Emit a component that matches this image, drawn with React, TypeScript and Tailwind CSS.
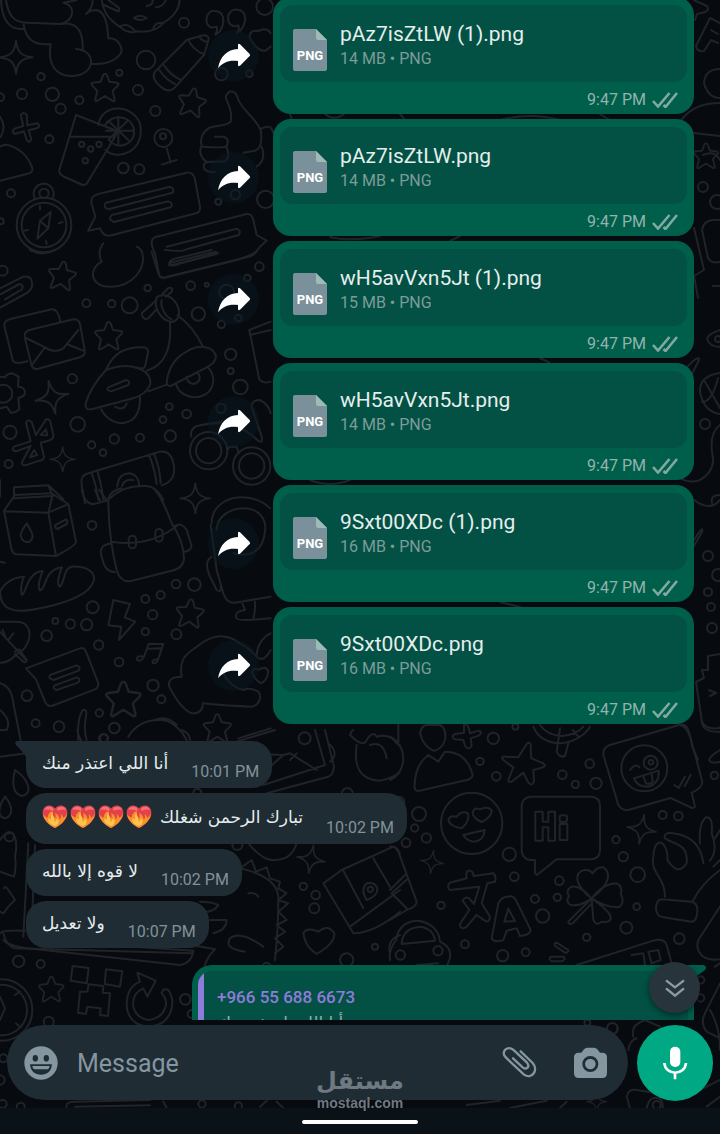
import React from "react";

type Point = [number, number, number];

const STAR = "M0 -42Q4 -42 6 -37L13 -18L36 -15Q45 -13 38 -6L23 10L29 35Q30 44 22 39L0 25L-22 39Q-30 44 -29 35L-23 10L-38 -6Q-45 -13 -36 -15L-13 -18L-6 -37Q-4 -42 0 -42Z";
const SPARK = "M0 -50C4 -15 15 -4 50 0C15 4 4 15 0 50C-4 15 -15 4 -50 0C-15 -4 -4 -15 0 -50Z";

function Dots({ items }: { items: Point[] }) {
  return (
    <>
      {items.map(([x, y, r], i) => (
        <circle key={i} cx={x} cy={y} r={r} />
      ))}
    </>
  );
}

function Wallpaper() {
  return (
    <svg
      aria-hidden="true"
      className="absolute inset-0 h-full w-full"
      viewBox="0 0 720 1134"
      preserveAspectRatio="xMinYMin slice"
      fill="none"
      stroke="#202429"
      strokeWidth={6}
      strokeLinecap="round"
      strokeLinejoin="round"
    >
      <g transform="scale(.33333)">
        <path d="M3 0C5 60 30 92 72 86M18 0C25 45 40 68 80 68L180 72C225 65 228 15 190 8Q215 4 230 0M70 68C75 115 100 138 152 132M180 72C235 62 250 100 248 148M152 132C142 190 165 228 215 228C285 228 295 152 228 147M278 192C335 195 375 165 362 138C352 118 338 113 325 115C322 70 315 35 290 30Q270 30 258 42Q278 25 278 0" />
        <path d="M305 0C312 45 335 65 362 82Q385 103 412 94Q440 98 465 88Q485 78 490 68C525 50 540 20 538 0M312 15L345 30Q365 40 355 22L325 0M440 18Q460 15 458 0M468 22Q490 20 498 0M402 54Q420 40 440 54Q420 66 402 54M360 80Q380 66 404 92M460 85Q465 65 490 70" />
        <path d="M560 120L465 215Q452 235 480 258Q505 282 525 262L612 165L626 118Q626 104 610 106L572 116ZM566 122Q580 150 610 162M598 110Q606 124 624 126M492 196Q512 226 540 238M478 210Q498 240 525 252" />
        <path transform="translate(48 172)" d={SPARK} />
        <path transform="translate(315 263)" d={STAR} />
        <path transform="translate(576 307) rotate(10)" d={STAR} />
        <path d="M622 72C612 45 632 28 650 34C672 38 672 62 668 75Q662 98 646 104Q654 90 650 80Q630 88 622 72M687 68C677 40 697 25 714 29C738 33 738 58 733 70Q726 92 711 98Q719 84 715 76Q695 84 687 68" />
        <path d="M228 345L178 510Q176 520 188 528L248 555Q258 556 262 548L345 410Q352 398 344 390ZM211 410H342M295 375C305 310 395 310 420 370C438 455 352 485 316 450M316 375C335 340 395 345 402 390C406 440 345 450 326 418M355 350V430M318 392H400M328 365L385 420M383 362L330 415" />
        <path d="M62 345Q70 334 80 344L82 376L112 370Q124 376 112 384L86 391L94 417Q88 432 80 420L72 394L44 402Q32 394 44 386L70 378Z" />
        <path d="M0 440Q15 430 30 437Q82 455 98 508Q95 520 80 522L0 542M0 350Q20 380 2 410" />
        <path d="M500 445L512 487M485 494L530 480" />
        <path d="M692 365C700 330 680 310 677 290C685 268 705 270 712 290C718 325 765 350 782 390Q790 445 765 452L730 458M692 365C675 380 640 376 625 385C605 400 600 420 605 438C595 455 605 478 620 485C600 500 615 520 645 515M645 410H670Q690 415 680 438Q670 445 610 440M680 443Q692 470 675 484L620 486M785 385Q815 370 820 400M770 500Q800 480 785 440" />
        <path d="M310 578L560 518Q578 516 584 534L600 620Q602 636 588 640L335 706Q310 712 300 685L264 692L286 650L274 608Q272 590 290 584ZM318 608L510 560Q525 566 518 578L325 628Q306 620 318 608M335 645L505 604Q522 610 512 622L342 666Q322 658 335 645" />
        <circle cx="132" cy="675" r="82" />
        <circle cx="132" cy="675" r="67" />
        <path d="M104 594A30 30 0 1 1 158 594M152 636L120 662L112 716L145 685ZM120 662L145 685M120 618V628M176 670L188 666M72 692L84 690M140 732L138 722" />
        <path d="M465 712L740 642Q755 640 760 660L770 705L800 722L780 740M500 740L710 686Q725 692 716 705L560 748M465 712Q445 720 465 760L478 826Q484 838 498 832L690 785Q770 765 780 740M510 788L648 755M510 788Q502 802 520 794L650 762" />
        <path d="M748 110Q750 88 775 93Q800 80 812 100M748 110Q765 150 795 153L812 140" />
        <Dots items={[[552,68,15],[438,180,28],[123,230,11],[358,218,9],[66,282,15],[157,283,20],[238,301,12],[414,270,15],[182,326,15],[466,333,15],[148,418,12],[490,414,27],[489,409,9],[370,504,16],[418,508,15],[33,580,12],[132,580,14],[655,605,9],[706,584,14],[794,20,25],[664,222,19],[748,221,10],[245,433,8],[272,447,8],[297,433,8],[256,482,8],[2,664,9],[0,292,12],[797,598,26]]} />
      </g>
      <g transform="translate(0 250) scale(.33333)">
        <path transform="translate(186 77) rotate(8)" d={STAR} />
        <path transform="translate(326 258)" d={STAR} />
        <path transform="translate(156 442) rotate(-12)" d={SPARK} />
        <path transform="translate(188 628) scale(.75)" d={SPARK} />
        <path d="M305 35C260 60 275 115 335 110C400 108 435 55 428 15Q425 -5 410 -10M305 35Q290 5 310 -20M90 0Q130 20 165 0" />
        <path d="M0 115L70 80Q100 75 96 110Q90 125 75 132L0 173M0 134L58 102Q72 104 66 118L15 148" />
        <path d="M28 208L155 178Q175 176 180 214M28 208Q8 215 14 232L38 330Q42 345 82 334M88 240L220 208Q235 206 240 222L254 300Q258 315 240 322L115 356Q98 360 94 344L74 260Q72 245 88 240M78 264L135 292Q165 312 190 295L235 240M95 346L132 296M200 282L250 302" />
        <path d="M0 380L15 382Q22 370 38 370L56 380L54 410Q72 410 75 425Q76 440 55 444L58 478Q45 490 32 488L20 470L0 476" />
        <circle cx="10" cy="431" r="27" />
        <path d="M78 518Q84 506 95 516L108 555L138 508Q150 505 152 520L160 555Q162 568 145 572L122 578L132 620Q132 630 118 632L75 646Q62 645 68 632L92 588L48 604Q32 600 42 590L92 574ZM122 555L138 538L142 556ZM90 622L102 600L112 615Z" />
        <path d="M470 150L425 190Q428 212 445 205L468 180M485 135L505 114Q520 110 516 124L498 140M470 142C460 170 480 210 515 216C545 210 540 175 525 155C510 135 485 130 470 142M485 150C480 170 495 200 515 208M510 218C515 290 500 345 440 362M532 195Q580 230 608 288M560 305C600 280 640 290 648 318Q646 340 620 352L512 408Q500 410 500 394Q510 330 560 305M622 350C650 378 645 425 605 438C570 450 535 430 528 402M560 380C562 402 585 410 598 390Q602 375 590 368M500 404L445 424" />
        <path d="M318 360C340 310 370 292 428 292Q446 292 444 308L435 350Q430 360 410 352M318 360C290 390 265 430 256 464Q255 480 275 478L405 443Q440 430 450 405C460 365 400 330 318 360M325 412L378 390Q392 392 385 405L334 424Q316 422 325 412M303 478C320 510 355 528 385 515Q422 500 420 440M345 470Q370 485 380 460" />
        <path d="M265 670L480 605Q512 600 520 640Q530 682 500 700L485 706M265 670Q240 675 245 705L255 760M275 668Q290 710 295 750M292 662Q305 705 310 748M448 616Q465 660 470 702M462 610Q480 655 482 700M352 710Q355 670 390 670Q415 675 418 706M366 708Q374 685 400 690M330 745Q370 705 440 708Q470 710 490 750" />
        <path d="M455 5L475 70Q480 86 498 82L740 22Q768 15 772 0M495 0Q550 5 555 0M508 38Q512 28 530 25L635 0M508 38Q515 52 535 42L655 8" />
        <circle cx="626" cy="602" r="56" />
        <circle cx="626" cy="602" r="38" />
        <circle cx="755" cy="648" r="56" />
        <circle cx="755" cy="648" r="38" />
        <path d="M574 560Q568 540 590 528L690 510M682 600L690 590L710 590L716 610M590 528Q700 500 772 570Q790 585 785 560L755 470Q755 450 780 450Q805 462 812 490" />
        <path d="M748 240L812 215M748 240L778 388Q790 402 812 395M750 255L812 240" />
        <path d="M42 712L145 706L158 738L42 745ZM145 706L190 748M0 690V740" />
        <Dots items={[[8,62,15],[259,160,12],[335,161,11],[389,166,24],[443,114,10],[572,107,13],[620,104,6],[595,192,20],[664,223,11],[715,204,10],[680,126,22],[742,84,10],[778,50,13],[692,313,17],[692,363,9],[721,411,22],[217,386,14],[233,523,22],[30,547,20],[26,642,12],[275,585,11],[343,567,14],[309,608,10],[420,563,12],[511,558,17],[508,470,10],[560,492,13],[489,509,10],[663,475,14]]} />
      </g>
      <g transform="translate(0 490) scale(.33333)">
        <path d="M42 15L155 10L205 42L228 155Q230 165 168 198L50 193Q40 192 35 180L12 62L45 15M12 64L145 68L205 42M145 68L168 198M145 68L158 15M80 100Q62 125 62 138Q68 160 88 155Q104 145 94 125ZM165 106L198 88Q205 92 200 102L172 117Q164 114 165 106" />
        <path d="M325 25Q335 0 365 -5M465 0Q485 20 515 100Q550 150 552 205Q550 235 515 242L390 274Q360 276 350 240C335 180 325 120 325 25M335 155C400 165 470 155 530 108M335 160C305 165 295 175 308 210Q315 245 345 247M524 108Q545 95 560 120L574 165Q576 180 555 185M245 0Q255 42 280 43L325 30M285 0L300 30M298 0L318 28" />
        <rect x="386" y="137" width="22" height="38" rx="11" />
        <rect x="466" y="117" width="22" height="38" rx="11" />
        <path d="M0 305C15 275 40 262 72 260Q58 295 66 315C78 310 82 245 128 243Q110 290 120 302C140 295 130 240 186 232Q168 275 178 290C195 285 188 235 215 230C265 228 285 248 282 270C270 320 175 345 105 358C45 370 0 360 0 305" />
        <path d="M340 330L390 342L374 382L406 395L357 450L364 410L325 406Z" />
        <path transform="translate(570 370) rotate(5)" d={STAR} />
        <path transform="translate(370 628) scale(1.25)" d={STAR} />
        <path transform="translate(652 715)" d={STAR} />
        <path transform="translate(586 25) scale(.9)" d={SPARK} />
        <path d="M0 395H50C90 395 95 435 82 460Q70 485 50 492Q25 520 0 518M0 425L80 512M45 485Q60 470 66 490L80 510Q78 520 70 515L45 492M25 450L40 430M18 445L8 420" />
        <path d="M78 535L240 475Q252 470 258 485L295 580Q296 592 285 598L155 648Q142 650 135 635L108 568ZM150 555L230 526Q244 532 236 542L160 570Q144 565 150 555M165 586L230 562Q244 568 234 578L170 600Q154 595 165 586" />
        <path d="M432 500L446 462H490L474 508M445 476L482 475M432 500Q410 495 410 508Q420 520 432 500M474 508Q455 508 458 518Q468 525 474 508" />
        <path d="M635 100C635 45 685 20 730 22Q780 25 810 55M650 120C650 80 690 55 730 55C780 55 800 90 795 125C790 175 760 205 700 190M632 105L650 240L670 310Q680 340 705 338L812 320M635 200Q610 215 630 260L650 300Q665 310 662 290M728 342L735 360Q700 365 710 385Q715 395 812 385M765 335V350Q765 370 760 385" />
        <path d="M545 560C535 500 565 490 590 470C640 430 680 430 720 460Q755 480 770 500M545 560Q500 560 508 590Q540 655 575 670C600 672 610 655 608 640Q690 648 755 650C780 645 785 620 775 605Q750 590 730 600Q690 590 670 550M755 545Q765 530 775 540Q800 525 805 545Q800 575 782 580Q760 565 755 545M770 500C770 465 790 440 812 430M812 480Q790 520 770 500" />
        <path d="M0 580Q35 590 40 640L62 750M0 660Q35 690 20 720L0 720M235 750Q230 690 248 660Q262 655 258 680Q250 720 260 750M385 740C410 700 450 685 500 692Q540 710 560 750M465 690Q500 675 530 705M715 745L812 715M0 215L15 218" />
        <Dots items={[[276,106,13],[528,282,13],[583,284,19],[436,327,12],[482,315,12],[458,374,14],[436,425,11],[529,433,15],[278,352,18],[166,393,9],[211,402,14],[260,404,17],[140,437,16],[296,465,14],[357,516,13],[459,586,17],[484,628,12],[298,669,11],[343,714,16],[312,745,12],[81,617,16],[107,700,12],[177,710,16]]} />
      </g>
      <g transform="translate(0 730) scale(.33333)">
        <path d="M45 120C35 160 38 190 65 198C95 195 95 155 45 120M15 200C-5 230 -10 260 15 265C40 258 40 230 15 200M0 330Q15 305 38 310Q55 330 45 380Q50 410 42 440L0 425M12 475Q15 465 25 480L45 510L25 530L10 550L0 545M0 80L80 70M85 340L70 620M105 345L95 600" />
        <path d="M232 0Q235 20 245 35M545 0Q570 10 570 30M710 35L825 0M945 0L975 105L790 165M975 0L1002 110Q1000 135 985 140L800 190M740 70L850 75L870 70L950 120M810 110L850 75M870 90L890 70M985 40Q1020 70 990 95M1050 15Q1055 0 1060 0M1050 15Q1090 55 1100 30Q1120 0 1130 20Q1170 10 1190 40M1070 45Q1055 150 1140 152Q1180 145 1200 125M1110 45Q1150 30 1160 85" />
        <path d="M745 340Q790 395 825 390Q875 390 890 340M720 415L755 390L768 425L800 412L810 445L840 455L835 475L860 490L835 510L865 520L835 545L860 570L830 585L855 605L825 625L850 650L825 670M720 415Q830 440 835 500Q835 600 825 690M745 490Q765 485 775 500M600 545Q640 550 655 525Q635 515 600 515M630 570H680Q680 600 640 610M790 650Q720 600 690 625Q670 655 735 665M0 610Q5 600 75 602M10 610Q20 650 45 655L575 670" />
        <path transform="translate(933 388) scale(.85) rotate(10)" d={SPARK} />
        <path d="M970 460L1025 420L1180 350Q1190 350 1200 370M970 460L1060 610Q1120 610 1200 545M1030 422L1090 535M1120 385L1170 470M1050 590L1200 480M1100 510Q1080 480 1100 460Q1130 455 1132 480Q1130 500 1100 510M910 610Q920 590 955 605Q985 580 1003 610Q1005 640 950 672Q915 650 910 610M1170 670Q1160 630 1200 615" />
        <Dots items={[[914,25,18],[310,25,13],[1042,190,16],[1190,215,14],[28,320,14],[910,469,11],[947,495,13],[943,535,15],[1125,650,9],[712,345,15],[1111,478,8],[592,188,12]]} />
      </g>
      <g transform="translate(390 720) scale(.33333)">
        <path d="M0 50Q40 70 40 120Q35 165 0 180M90 40Q95 15 110 15H150Q170 25 165 60Q155 90 130 92Q100 80 90 40M115 105L145 125L165 95Q230 95 248 165Q245 180 220 182L85 213Q72 213 74 195Q75 135 115 105M25 0V75" />
        <path d="M222 15Q235 8 240 40L265 32Q280 35 268 46L242 55L245 78Q235 92 225 78L220 60L195 58Q180 50 195 42L222 38Z" />
        <path d="M410 72Q425 60 422 88L424 115L455 128Q475 138 455 143L430 150L432 185Q425 200 415 188L400 158L365 185Q350 190 358 172L370 142L340 120Q330 108 348 110L385 112Z" />
        <path d="M430 20Q450 70 515 70Q575 60 600 20M450 15Q470 45 515 48Q560 45 580 20M510 25L500 95Q510 115 525 108L535 70M548 30L565 50" />
        <circle cx="245" cy="310" r="92" />
        <path d="M175 300Q180 285 200 290Q215 270 234 280Q240 305 215 325Q180 320 175 300M248 280Q250 260 270 268Q290 258 305 270Q305 292 275 306Q250 295 248 280M220 345L284 330Q280 365 250 365Q230 362 220 345" />
        <path d="M420 230H605Q630 232 630 258V392Q628 416 605 418H500L442 464Q435 464 435 455V420H420Q395 415 395 390V258Q395 235 420 230ZM436 275H458V305H475V275H495V362H475V322H458V362H436ZM509 312H532V360H509Z" />
        <rect x="509" y="286" width="22" height="20" rx="6" />
        <path d="M660 75L870 14Q888 12 895 30L937 185Q938 205 905 218L915 260Q910 268 898 260L842 234L715 270Q695 272 685 255L640 105Q638 82 660 75M720 150Q735 128 748 142M732 175L806 152Q810 190 775 200Q740 200 732 175M760 170L768 190Q780 195 788 185L785 162M853 195L866 204L885 170M884 198L902 165" />
        <circle cx="763" cy="145" r="69" />
        <circle cx="782" cy="128" r="21" />
        <path transform="translate(755 328) scale(.88) rotate(10)" d={SPARK} />
        <path transform="translate(126 426) scale(.7) rotate(8)" d={SPARK} />
        <path d="M825 530C825 470 780 460 790 410Q792 365 815 368Q835 385 832 420Q865 470 890 430C895 370 855 375 825 355Q820 335 850 340Q930 350 940 430M908 545Q930 495 990 450M930 370Q925 310 948 292Q970 290 965 340Q985 390 960 422M975 355L990 330M970 440L990 420M815 538L905 545Q925 550 922 575Q920 605 905 605L820 592Q798 590 798 560Q800 540 815 538" />
        <path d="M180 488L230 475Q225 450 240 452Q252 455 250 468L310 460Q320 470 315 485L292 490L275 550L300 590Q298 610 285 602L260 585L228 622Q210 630 210 612L238 570L218 542Q225 528 238 535L252 552L268 500L180 510Q168 500 180 488" />
        <path d="M305 655L325 550Q335 530 352 530Q372 525 380 545L422 630Q420 645 390 648L380 625L350 632L340 660Q315 670 305 655M355 566L343 605L375 603Z" />
        <path d="M605 535Q570 510 562 480Q560 455 582 450Q600 448 608 460Q620 440 640 442Q655 450 654 472Q650 500 605 535Q640 490 680 490Q700 500 692 522Q705 545 690 560Q650 565 605 535Q570 560 542 555Q525 545 537 528Q525 510 545 500Q570 495 605 535L610 600Q620 620 635 605Q665 610 662 590Q655 570 605 535L535 605Q535 615 548 610L605 550" />
        <path d="M0 380Q15 378 25 395L80 545Q80 560 50 570L0 600M45 465L0 510M55 475L5 520L50 565" />
        <path d="M18 660C25 610 65 600 90 603Q145 615 150 665Q185 680 180 715L170 740M35 670Q38 625 90 620Q130 625 135 662L35 672ZM18 660Q-5 690 0 720M80 735L145 730" />
        <path d="M500 668L535 690Q535 700 525 698L495 678Q490 668 500 668M482 710H522Q528 720 515 724H485Q475 718 482 710M560 735L780 665Q820 650 830 675L845 730M725 705L760 700L765 735M775 695L805 690L812 720L785 730Z" />
        <path d="M990 560L925 660Q915 690 940 710Q960 722 990 718M935 0Q935 38 990 35M990 90Q955 110 958 122Q965 132 990 125" />
        <Dots items={[[310,55,17],[376,20,9],[270,124,11],[319,169,13],[517,164,13],[599,131,13],[556,193,11],[618,190,17],[26,247,17],[87,282,21],[74,324,11],[109,354,14],[48,368,13],[358,403,20],[373,470,13],[508,482,13],[435,537,12],[502,532,11],[458,588,20],[153,556,11],[225,673,12],[338,707,17],[407,697,12],[590,652,11],[709,623,18],[740,560,10],[743,464,22],[700,410,14],[678,359,11],[818,285,12],[865,288,13],[868,656,16],[973,166,11],[31,705,14],[144,692,14],[783,127,7]]} />
      </g>
      <g transform="translate(0 940) scale(.33333)">
        <circle cx="5" cy="210" r="92" />
        <circle cx="5" cy="210" r="76" />
        <path d="M0 170L15 205L0 240M45 165L60 155M48 250L62 262" />
        <path transform="translate(154 148) scale(.9)" d={STAR} />
        <path d="M218 78L266 84L260 130L212 122ZM318 88L367 94L360 140L314 132ZM266 133L310 138L308 158L330 160L324 228L300 225L302 205L262 200L258 222L234 218L240 155L262 155Z" />
        <path d="M412 98L467 122L442 170L430 145Q395 160 400 200Q410 235 445 240Q490 235 498 195Q500 175 485 160Q488 142 505 150Q525 180 512 215Q495 260 440 260Q380 250 380 190Q382 140 420 125Z" />
        <path d="M10 0Q30 22 110 28L540 75Q575 70 580 32L240 10M575 15L645 28Q610 60 610 110M200 504Q195 485 225 485L450 480M225 500L450 496M490 485L500 504M780 500L800 482M830 485L850 504" />
        <Dots items={[[56,64,17],[122,72,12],[146,245,15],[556,178,16],[575,222,12],[0,420,14],[10,355,12],[8,492,12],[62,500,12],[606,492,11],[715,498,11],[800,80,12],[1040,60,20]]} />
      </g>
      <g transform="translate(360 940) scale(.33333)">
        <path d="M1050 210Q1080 260 1080 330M1035 220L1080 130M1035 220Q1020 250 1040 275L1080 295M820 290Q810 255 855 240L900 260M805 330Q810 300 830 295M770 255Q780 280 755 285M1080 70L1065 80M800 470Q805 445 830 450L960 470M800 470L810 504M860 504Q870 465 895 475Q910 480 908 504M1010 455L1080 420M1040 500L1080 470M320 495L420 482M450 504L560 482M600 504L620 485" />
        <path transform="translate(710 485) scale(.6)" d={SPARK} />
        <Dots items={[[1022,120,11],[1022,174,11],[757,265,16],[682,248,9],[890,495,12]]} />
      </g>
      <g transform="translate(680 0)" strokeWidth={2}>
        <path d="M14 0L27 6Q30 10 25 12L17 14L15 20M40 23L30 18L16 46Q17 52 24 51L31 40L38 43M31 30L38 34M40 69Q25 69 24 83Q28 98 40 98M0 122Q12 103 40 103M14 133L40 136M23 155Q35 150 40 160M22 155" />
        <path transform="translate(26 156) scale(.3)" d={STAR} strokeWidth={6} />
        <path d="M14 228L24 270L14 276L18 298M40 220Q24 218 22 230L28 258Q32 264 40 262M33 286H40M40 330Q28 334 27 339Q30 347 40 347M0 375Q20 352 19 360L12 374M40 373Q19 376 20 392Q24 412 40 414M24 380L40 408M22 402Q32 402 38 378M40 425Q28 434 33 458Q34 472 20 480Q10 484 0 478M14 500Q30 512 40 500M14 540Q24 524 22 532L14 546M40 495Q30 495 32 503M40 654L28 656V670H22L24 678L16 682L22 722Q26 730 40 728M29 690L36 693L30 696M0 725Q10 728 12 746L18 760" />
        <Dots items={[[23,187,5],[37,202,7],[25,424,5],[28,556,5],[38,575,6],[28,592,4],[31,607,4],[32,628,5],[38,339,3]]} />
      </g>
      <path strokeWidth={2} d="M290 114L292 120M325 114Q335 122 345 113M400 114L405 120M500 120Q530 112 560 120M600 114L608 119M330 237Q350 242 380 236M450 241L460 236M540 358L550 363M310 480Q330 488 350 480M500 602L520 607" />
    </svg>
  );
}

function ForwardIcon() {
  return (
    <svg aria-hidden="true" className="h-[26px] w-[34px]" viewBox="50 127 102 78" fill="#fff">
      <path d="M53 203C60 167 80 147 113 145V134Q113 127 119 131L148 160Q151 163 148 166L119 195Q113 199 113 192V181C88 177 68 184 53 203Z" />
    </svg>
  );
}

function Ticks() {
  return (
    <svg aria-label="Delivered" role="img" className="h-4 w-[26px]" viewBox="0 0 26 16" fill="none" stroke="#82a9a1" strokeWidth={2.6}>
      <path d="M1 9L6 14.500L17.500 1M11.500 13L13.500 15L25 1" />
    </svg>
  );
}

function FileIcon() {
  return (
    <svg role="img" aria-label="PNG" className="h-[42px] w-[34px] shrink-0" viewBox="0 0 34 42">
      <path d="M2 0H23L34 11V40Q34 42 32 42H2Q0 42 0 40V2Q0 0 2 0Z" fill="#7a909b" />
      <path d="M23 0L34 11H25Q23 11 23 9Z" fill="#9dbbb7" />
      <text x="17" y="31" textAnchor="middle" fill="#fff" className="font-[Roboto] text-[13px] font-bold">PNG</text>
    </svg>
  );
}

function FireHeart() {
  return (
    <svg role="img" aria-label="heart on fire" className="h-6 w-[26px]" viewBox="66 32 80 72">
      <path d="M106 102C84 90 68 74 68 54C68 32 94 26 106 42C118 26 144 32 144 54C144 74 128 90 106 102Z" fill="#e2414a" />
      <path d="M73 46C78 34 93 32 101 42Q104 48 98 49Q84 42 73 46ZM111 44C120 33 135 34 140 46Q126 42 116 49Z" fill="#f4717a" />
      <path d="M106 102C86 92 70 76 69 58C74 66 78 69 84 69C84 60 90 50 100 50C97 60 102 65 105 72C110 69 108 62 106 56C116 60 120 67 120 76C125 74 126 66 123 59C129 63 131 67 132 71Q140 65 143 56C143 75 126 92 106 102Z" fill="#f9912b" />
      <path d="M100 94C86 88 83 78 87 72Q91 77 94 74C94 66 93 60 98 54C97 64 107 70 104 83Q110 81 113 72C122 80 117 91 108 96Z" fill="#ffc44d" />
    </svg>
  );
}

function DocumentRow({ name, size }: { name: string; size: string }) {
  return (
    <li className="flex items-center justify-end gap-3.5 pr-[26px]">
      <button type="button" aria-label={`Forward ${name}`} className="flex size-[51px] shrink-0 items-center justify-center rounded-full bg-[#0b1721]/50">
        <ForwardIcon />
      </button>
      <article className="h-[117px] w-[421px] rounded-[18px] bg-[#005f4b] px-[7px] pt-2">
        <a href="#file" className="flex h-[77px] gap-[13px] rounded-[13px] bg-[#025144] pl-[13px]">
          <span className="pt-6"><FileIcon /></span>
          <span className="flex flex-col pt-4">
            <span className="text-[21px] leading-[26px] text-[#e5eeec]">{name}</span>
            <span className="text-[16px] leading-[23px] text-[#7d9b99]">{size} • PNG</span>
          </span>
        </a>
        <p className="flex items-center justify-end gap-1.5 pt-[7px] pr-[9px] text-[16px] leading-[22px] text-[#93b3ad]">
          <time>9:47 PM</time>
          <Ticks />
        </p>
      </article>
    </li>
  );
}

function TextMessage({ text, time, hearts = 0, tail = false }: { text: string; time: string; hearts?: number; tail?: boolean }) {
  return (
    <li className={`relative flex w-fit items-end gap-[23px] rounded-[20px] bg-[#1f2c33] pr-[13px] pl-4 ${hearts ? "h-[51px]" : "h-[47px]"} ${tail ? "rounded-tl-none" : ""}`}>
      {tail && (
        <svg aria-hidden="true" className="absolute top-0 -left-[11px] h-4 w-[11px]" viewBox="0 0 11 16" fill="#1f2c33">
          <path d="M2 0H11V16Q9 12 1 4Q-1 1 2 0Z" />
        </svg>
      )}
      <p dir="rtl" className="flex items-center gap-2 self-center pb-1 font-['DejaVu_Sans',sans-serif] text-[17px] leading-7 text-[#e6ecef]">
        {text}
        {hearts > 0 && (
          <span className="flex gap-0.5">
            {Array.from({ length: hearts }, (_, i) => (
              <FireHeart key={i} />
            ))}
          </span>
        )}
      </p>
      <time className="pb-[5px] text-[16px] leading-[22px] text-[#82929a]">{time}</time>
    </li>
  );
}

const documents = [
  { name: "pAz7isZtLW (1).png", size: "14 MB" },
  { name: "pAz7isZtLW.png", size: "14 MB" },
  { name: "wH5avVxn5Jt (1).png", size: "15 MB" },
  { name: "wH5avVxn5Jt.png", size: "14 MB" },
  { name: "9Sxt00XDc (1).png", size: "16 MB" },
  { name: "9Sxt00XDc.png", size: "16 MB" },
];

export default function App() {
  return (
    <div className="relative flex h-screen flex-col overflow-hidden bg-[#070a0f] font-[Roboto,'DejaVu_Sans',sans-serif]">
      <Wallpaper />
      <main className="relative flex min-h-0 flex-1 flex-col">
        <div className="min-h-0 flex-1 overflow-hidden">
          <ul className="-mt-[3px] flex flex-col gap-[5px]">
            {documents.map((doc) => (
              <DocumentRow key={doc.name} {...doc} />
            ))}
          </ul>
          <ul className="mt-[17px] flex flex-col gap-[5px] pl-[26px]">
            <TextMessage text="أنا اللي اعتذر منك" time="10:01 PM" tail />
            <TextMessage text="تبارك الرحمن شغلك" time="10:02 PM" hearts={4} />
            <TextMessage text="لا قوه إلا بالله" time="10:02 PM" />
            <TextMessage text="ولا تعديل" time="10:07 PM" />
          </ul>
          <article className="relative mt-[17px] mr-[26px] ml-[192px] rounded-tl-[20px] bg-[#005f4b] px-1.5 pt-1.5">
            <svg aria-hidden="true" className="absolute top-0 -right-3 h-[13px] w-3" viewBox="0 0 12 13" fill="#005f4b">
              <path d="M0 0H9Q14 1 11 5L0 13Z" />
            </svg>
            <blockquote className="flex overflow-hidden rounded-tl-[14px] bg-[#025144]">
              <span className="w-1.5 bg-[#8e7cdb]" />
              <div className="pt-3.5 pl-[13px]">
                <p className="text-[17px] leading-6 font-medium text-[#8e7cdb]">+966 55 688 6673</p>
                <p dir="rtl" className="w-fit font-['DejaVu_Sans',sans-serif] text-[17px] leading-7 text-[#8fb0aa]">أنا اللي اعتذر منك</p>
              </div>
            </blockquote>
          </article>
        </div>
        <button type="button" aria-label="Scroll to latest" className="absolute right-5 bottom-[7px] flex size-[51px] items-center justify-center rounded-full bg-[#28343c] shadow-[0_2px_6px_rgba(0,0,0,0.5)]">
          <svg aria-hidden="true" className="h-[18px] w-5" viewBox="914 123 60 54" fill="none" stroke="#8c9ca7" strokeWidth={7}>
            <path d="M917 127L944 148L971 127M917 151L944 173L971 151" />
          </svg>
        </button>
      </main>
      <form className="relative flex items-start gap-[9px] px-[7px] pt-[5px] pb-[7px]" onSubmit={(e) => e.preventDefault()}>
        <div className="flex h-[75px] min-w-0 flex-1 items-center rounded-full bg-[#1f2c34] pr-5 pl-[17px]">
          <button type="button" aria-label="Emoji">
            <svg aria-hidden="true" className="size-[34px]" viewBox="74 319 102 102">
              <circle cx="125" cy="370" r="50" fill="#8496a0" />
              <ellipse cx="108" cy="356" rx="8" ry="10" fill="#1f2c33" />
              <ellipse cx="141" cy="356" rx="8" ry="10" fill="#1f2c33" />
              <path d="M92 374H158C156 396 143 405 125 405S94 396 92 374Z" fill="#1f2c33" />
              <path d="M99 379H151Q149 389 144 389H106Q101 389 99 379Z" fill="#8496a0" />
            </svg>
          </button>
          <input aria-label="Message" placeholder="Message" className="min-w-0 flex-1 bg-transparent px-[19px] pt-0.5 text-[25px] leading-8 text-[#e6ecef] outline-none placeholder:text-[#8496a0]" />
          <button type="button" aria-label="Attach">
            <svg aria-hidden="true" className="h-8 w-[35px]" viewBox="425 322 105 96" fill="none" stroke="#8496a0" strokeWidth={7} strokeLinecap="round">
              <path d="M481 335L517 370C536 391 514 421 491 405L437 354C418 336 443 315 461 332L500 369C510 381 498 392 487 383L458 356" />
            </svg>
          </button>
          <button type="button" aria-label="Camera" className="ml-9">
            <svg aria-hidden="true" className="h-8 w-[35px]" viewBox="639 321 105 96" fill="#8496a0">
              <path d="M656 338H664L672 328Q676 323 682 323H702Q708 323 712 328L720 338H727Q741 338 741 352V400Q741 414 727 414H656Q642 414 642 400V352Q642 338 656 338Z" />
              <circle cx="691" cy="372" r="20" stroke="#1f2c33" strokeWidth={8} />
            </svg>
          </button>
        </div>
        <button type="button" aria-label="Record voice message" className="flex size-[76px] shrink-0 items-center justify-center rounded-full bg-[#00a884]">
          <svg aria-hidden="true" className="h-[34px] w-[26px]" viewBox="907 319 78 102">
            <rect x="931" y="321" width="31" height="61" rx="15" fill="#fff" />
            <path d="M914 370C917 409 976 409 979 370M946 396V419" fill="none" stroke="#fff" strokeWidth={8} />
          </svg>
        </button>
      </form>
      <nav aria-label="System" className="relative flex h-[26px] shrink-0 items-center justify-center bg-[#0a1117]">
        <span className="mt-0.5 h-1 w-[116px] rounded-full bg-white" />
      </nav>
      <div className="pointer-events-none absolute inset-x-0 bottom-[23px] flex flex-col items-center text-[#6f7981]">
        <span className="font-['DejaVu_Sans',sans-serif] text-[24px] leading-7 font-bold">مستقل</span>
        <span className="font-['Liberation_Sans',sans-serif] text-[14px] leading-4 font-bold">mostaql.com</span>
      </div>
    </div>
  );
}
